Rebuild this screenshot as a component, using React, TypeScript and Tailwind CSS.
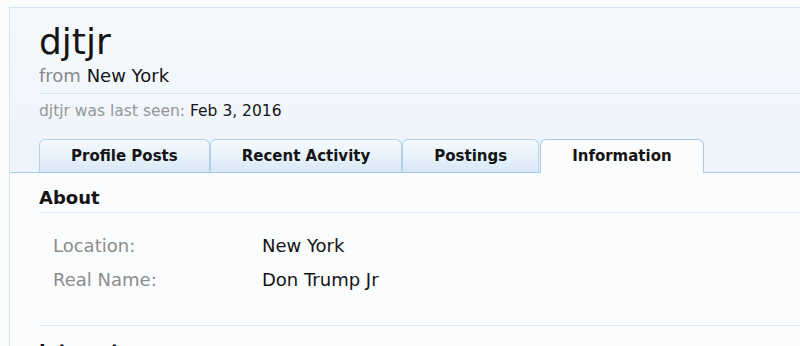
import React from "react";

const tabs = [
  { label: "Profile Posts", active: false },
  { label: "Recent Activity", active: false },
  { label: "Postings", active: false },
  { label: "Information", active: true },
];

const about = [
  { label: "Location:", value: "New York" },
  { label: "Real Name:", value: "Don Trump Jr" },
];

export default function App() {
  return (
    <div className="min-h-screen overflow-hidden bg-[#fafbfd] pt-[7px] pl-[9px] font-['DejaVu_Sans',Verdana,sans-serif] text-[#141414]">
      <div className="border-t border-l border-[#d3e4f4] bg-[#fbfcfe]">
        {/* Header */}
        <div className="bg-gradient-to-b from-[#f5f9fd] to-[#edf4fb] pt-[13px]">
          <div className="pl-[29px]">
            <h1 className="text-[36px] leading-[42px] font-normal">djtjr</h1>
            <p className="mt-[3px] text-[18px] leading-[20px]">
              <span className="text-[#8a8a8a]">from </span>New York
            </p>
            <div className="mt-[7px] border-t border-[#d6e6f4]" />
            <p className="mt-[7px] text-[15.5px] leading-[20px]">
              <span className="text-[#969696]">djtjr was last seen: </span>
              Feb 3, 2016
            </p>
          </div>

          {/* Tabs */}
          <div className="mt-[18px] flex items-end border-b border-[#a9cae6] pl-[29px]">
            {tabs.map((tab) =>
              tab.active ? (
                <div
                  key={tab.label}
                  className="-mb-px ml-px rounded-t-[6px] border border-b-0 border-[#a9cae6] bg-[#fbfcfe] px-[31px] pt-[7px] pb-[8px] text-[15px] leading-[18px] font-bold"
                >
                  {tab.label}
                </div>
              ) : (
                <div
                  key={tab.label}
                  className="rounded-t-[6px] border border-b-0 border-[#b3d1ea] bg-gradient-to-b from-[#f6fafd] to-[#d9e9f7] px-[31px] py-[7px] text-[15px] leading-[18px] font-bold"
                >
                  {tab.label}
                </div>
              )
            )}
          </div>
        </div>

        {/* Content */}
        <div className="pl-[29px] pt-[14px]">
          <h2 className="border-b border-[#d6e7f7] pb-[3px] text-[18px] leading-[22px] font-bold">
            About
          </h2>
          <dl className="mt-[16px] mb-[28px] pl-[14px] text-[18px] leading-[34px]">
            {about.map((row) => (
              <div key={row.label} className="flex">
                <dt className="w-[209px] text-[#8c8c8c]">{row.label}</dt>
                <dd>{row.value}</dd>
              </div>
            ))}
          </dl>
          <div className="border-t border-[#d6e7f7]" />
          <h2 className="mt-[14px] text-[18px] leading-[22px] font-bold">
            Interact
          </h2>
        </div>
      </div>
    </div>
  );
}
